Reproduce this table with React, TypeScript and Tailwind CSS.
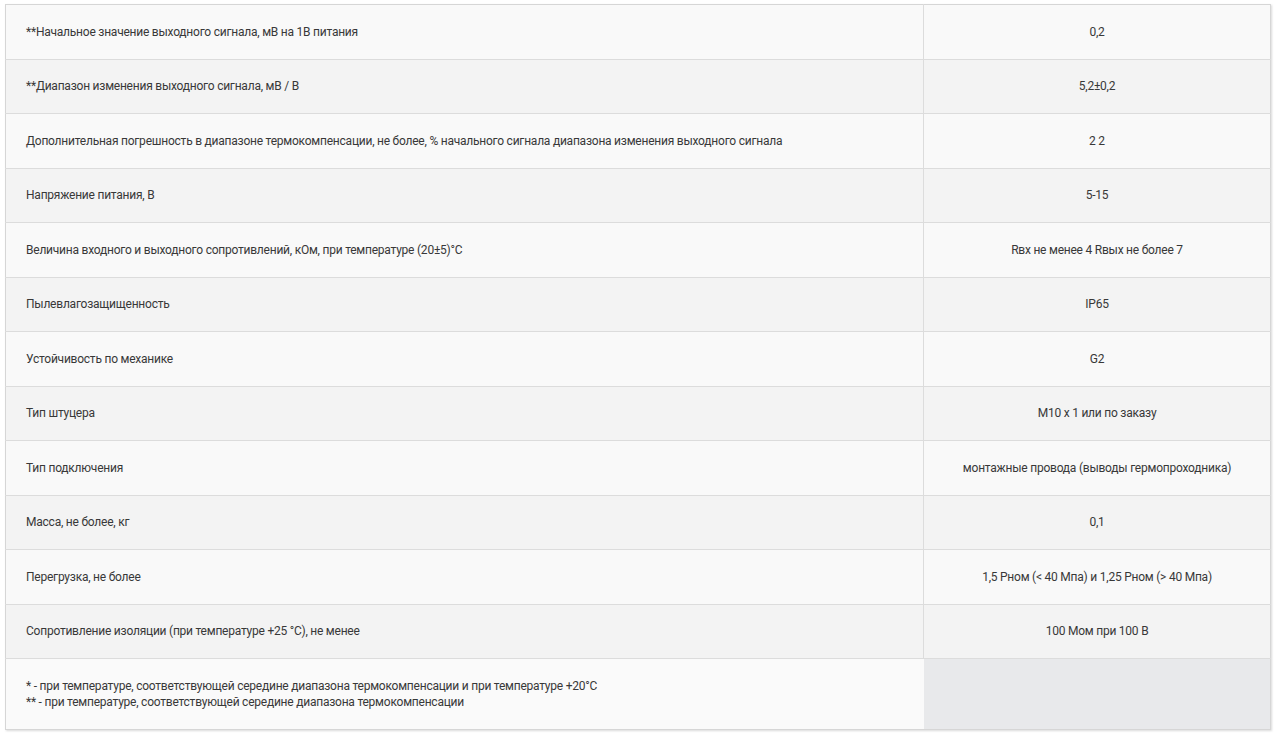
const rows: [string, string][] = [
  ['**Начальное значение выходного сигнала, мВ на 1В питания', '0,2'],
  ['**Диапазон изменения выходного сигнала, мВ / В', '5,2±0,2'],
  ['Дополнительная погрешность в диапазоне термокомпенсации, не более, % начального сигнала диапазона изменения выходного сигнала', '2 2'],
  ['Напряжение питания, В', '5-15'],
  ['Величина входного и выходного сопротивлений, кОм, при температуре (20±5)°С', 'Rвх не менее 4 Rвых не более 7'],
  ['Пылевлагозащищенность', 'IP65'],
  ['Устойчивость по механике', 'G2'],
  ['Тип штуцера', 'М10 х 1 или по заказу'],
  ['Тип подключения', 'монтажные провода (выводы гермопроходника)'],
  ['Масса, не более, кг', '0,1'],
  ['Перегрузка, не более', '1,5 Рном (< 40 Мпа) и 1,25 Рном (> 40 Мпа)'],
  ['Сопротивление изоляции (при температуре +25 °С), не менее', '100 Мом при 100 В'],
];

export default function App() {
  return (
    <div className="min-h-[736px] bg-white pt-1 pl-[5px] pr-[5px] font-['Roboto','Liberation_Sans',sans-serif] text-[12px] leading-4 tracking-[-0.23px] text-[#383838]">
      <table className="w-[1266px] border-collapse border border-[#d6d6d6] shadow-[1px_1px_2px_rgba(0,0,0,0.15)]">
        <tbody>
          {rows.map(([label, value], i) => (
            <tr key={i} className={`h-[54.5px] ${i % 2 === 0 ? 'bg-[#f9f9f9]' : 'bg-[#f3f3f3]'}`}>
              <td className="w-[918px] border-b border-r border-[#dcdcdc] pl-5 pr-4 align-middle">{label}</td>
              <td className="border-b border-[#dcdcdc] px-4 text-center align-middle">{value}</td>
            </tr>
          ))}
          <tr className="h-[71px]">
            <td className="w-[918px] bg-[#fafafa] pl-5 pr-4 align-middle">
              <div>* - при температуре, соответствующей середине диапазона термокомпенсации и при температуре +20°С</div>
              <div>** - при температуре, соответствующей середине диапазона термокомпенсации</div>
            </td>
            <td className="bg-[#e8e9eb]"></td>
          </tr>
        </tbody>
      </table>
    </div>
  );
}
